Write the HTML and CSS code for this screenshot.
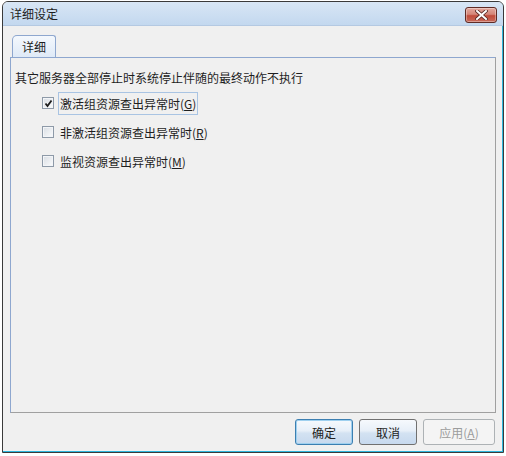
FILE: index.html
```html
<!DOCTYPE html>
<html lang="zh">
<head>
<meta charset="utf-8">
<link rel="stylesheet" href="styles.css">
</head>
<body>
<div class="window">
  <div class="titlebar">
    <span class="title">详细设定</span>
    <button class="close" aria-label="关闭">
      <svg width="13" height="10" viewBox="0 0 13 10"><path d="M2 1 L11 9 M11 1 L2 9" stroke="#5a2a25" stroke-width="3.6" stroke-linecap="square"/><path d="M2 1 L11 9 M11 1 L2 9" stroke="#ffffff" stroke-width="2" stroke-linecap="square"/></svg>
    </button>
  </div>
  <div class="client">
    <div class="tabs">
      <div class="tab">详细</div>
    </div>
    <div class="panel">
      <div class="caption">其它服务器全部停止时系统停止伴随的最终动作不执行</div>
      <div class="options">
        <label class="opt"><span class="box checked"><svg width="9" height="9" viewBox="0 0 9 9"><path d="M1.5 4.5 L3.5 7 L7.5 1.5" stroke="#1c1c1c" stroke-width="1.8" fill="none"/></svg></span><span class="lbl focus">激活组资源查出异常时(<u>G</u>)</span></label>
        <label class="opt"><span class="box"></span><span class="lbl">非激活组资源查出异常时(<u>R</u>)</span></label>
        <label class="opt"><span class="box"></span><span class="lbl">监视资源查出异常时(<u>M</u>)</span></label>
      </div>
    </div>
    <div class="buttons">
      <button class="btn default">确定</button>
      <button class="btn">取消</button>
      <button class="btn disabled" disabled>应用(<u>A</u>)</button>
    </div>
  </div>
</div>
</body>
</html>
```

FILE: styles.css
```css
html, body {
  margin: 0;
  padding: 0;
  background: #ffffff;
}
body {
  font-family: "Noto Sans CJK SC", "Noto Sans", sans-serif;
  font-size: 12px;
  color: #000;
}
.window {
  margin: 1px 0 0 2px;
  width: 500px;
  height: 450px;
  border: 1px solid #3a3a3a;
  border-radius: 6px 6px 0 0;
  display: flex;
  flex-direction: column;
  background: #f0f0f0;
  box-shadow: inset -1px -1px 0 #2fb6dc;
  overflow: hidden;
}
.titlebar {
  height: 23px;
  flex: none;
  display: flex;
  align-items: center;
  justify-content: space-between;
  padding: 0 6px 0 7px;
  background: linear-gradient(#d8e6f5, #c3d8ef);
  border-bottom: 1px solid #b4c9e2;
}
.title {
  font-size: 12px;
  color: #1e1e1e;
  line-height: 1;
}
.close {
  width: 32px;
  height: 16px;
  margin-top: 2px;
  padding: 0;
  border: 1px solid #5f2b25;
  border-radius: 3px;
  background: linear-gradient(#e3a89e 0%, #d48678 45%, #c04c3b 55%, #c86a5a 100%);
  display: flex;
  align-items: center;
  justify-content: center;
  box-shadow: inset 0 0 0 1px rgba(255,255,255,0.35);
}
.client {
  flex: 1;
  display: flex;
  flex-direction: column;
  padding: 9px 7px 6px 7px;
}
.tabs {
  display: flex;
  height: 22px;
  padding-left: 2px;
}
.tab {
  width: 44px;
  height: 22px;
  box-sizing: border-box;
  border: 1px solid #8ea7cf;
  border-bottom: none;
  border-radius: 5px 3px 0 0;
  background: linear-gradient(#f4f8fd, #dfeaf7);
  text-align: center;
  line-height: 21px;
  color: #1e1e1e;
}
.panel {
  height: 356px;
  box-sizing: border-box;
  border: 1px solid #a0a0a0;
  border-left-color: #8ea7cf;
  border-top-color: #8ea7cf;
  padding: 11px 4px 0 4px;
}
.caption {
  line-height: 18px;
  color: #1e1e1e;
}
.options {
  display: flex;
  flex-direction: column;
  gap: 7px;
  margin-top: 5px;
  padding-left: 27px;
}
.opt {
  display: flex;
  align-items: center;
  height: 22px;
  color: #1e1e1e;
}
.box {
  width: 12px;
  height: 12px;
  box-sizing: border-box;
  border: 1px solid #8e9aa8;
  background: linear-gradient(135deg, #d8dde3, #fbfcfd);
  box-shadow: inset 0 0 0 1px #f3f5f8;
  display: flex;
  align-items: center;
  justify-content: center;
  margin-right: 4px;
}
.box svg { display: block; }
.lbl {
  padding: 2px 1px;
  border: 1px solid transparent;
  line-height: 17px;
}
.lbl.focus {
  border-color: #a9c4e3;
}
u {
  text-decoration: underline;
}
.buttons {
  display: flex;
  justify-content: flex-end;
  gap: 6px;
  margin-top: 6px;
  padding-right: 1px;
}
.btn {
  height: 26px;
  width: 58px;
  font-family: inherit;
  font-size: 12px;
  color: #1e1e1e;
  border: 1px solid #707070;
  border-radius: 3px;
  background: linear-gradient(#f6f9fd 0%, #e7eff8 45%, #d3e2f2 55%, #c7d9ee 100%);
  padding: 0;
}
.btn.default {
  border-color: #3c7fb1;
  box-shadow: inset 0 0 0 1px #9fd0ef;
}
.btn.disabled {
  width: 72px;
  color: #9c9c9c;
  border-color: #adb2b5;
  background: #f4f4f4;
}
```
